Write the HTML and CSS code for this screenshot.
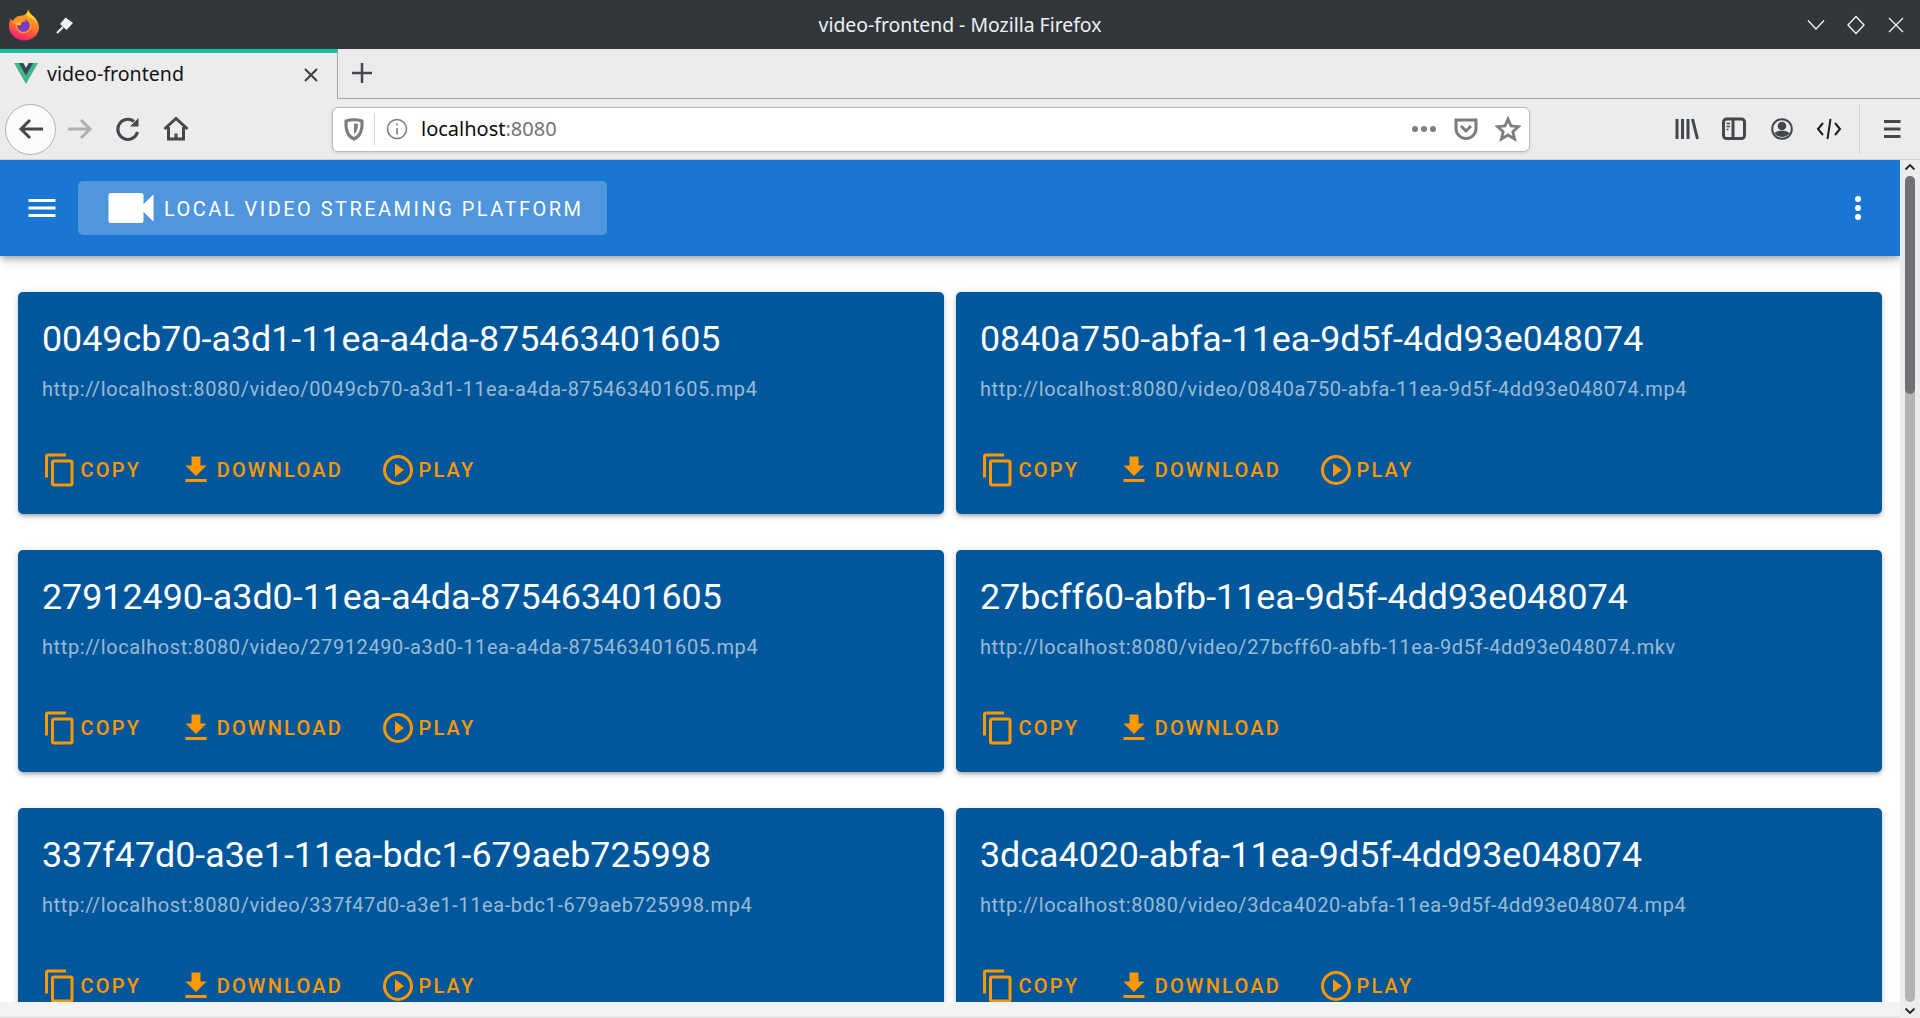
FILE: index.html
```html
<!DOCTYPE html>
<html lang="en">
<head>
<meta charset="utf-8">
<title>video-frontend</title>
<link rel="stylesheet" href="styles.css">
</head>
<body>
<svg class="defs" width="0" height="0" aria-hidden="true">
  <defs>
    <symbol id="i-copy" viewBox="0 0 24 24"><path d="M19,21H8V7H19M19,5H8A2,2 0 0,0 6,7V21A2,2 0 0,0 8,23H19A2,2 0 0,0 21,21V7A2,2 0 0,0 19,5M16,1H4A2,2 0 0,0 2,3V17H4V3H16V1Z"/></symbol>
    <symbol id="i-download" viewBox="0 0 24 24"><path d="M5,20H19V18H5M19,9H15V3H9V9H5L12,16L19,9Z"/></symbol>
    <symbol id="i-play" viewBox="0 0 24 24"><path d="M10,16.5L16,12L10,7.5V16.5M12,20C7.59,20 4,16.41 4,12C4,7.59 7.59,4 12,4C16.41,4 20,7.59 20,12C20,16.41 16.41,20 12,20M12,2A10,10 0 0,0 2,12A10,10 0 0,0 12,22A10,10 0 0,0 22,12A10,10 0 0,0 12,2Z"/></symbol>
    <linearGradient id="ff-a" x1="0.7" y1="0" x2="0.35" y2="1">
      <stop offset="0" stop-color="#ffc02a"/><stop offset="0.4" stop-color="#ff8a25"/><stop offset="0.75" stop-color="#ff4a4a"/><stop offset="1" stop-color="#e5177c"/>
    </linearGradient>
  </defs>
</svg>

<header class="titlebar">
  <div class="tb-left">
    <svg class="ff-logo" width="32" height="32" viewBox="0 0 32 32">
      <path fill="url(#ff-a)" d="M20 0.500c.5 3 3.500 5 6.500 8 2.500 3 4.500 6.500 4.500 9.500 0 8-6.500 13.500-15 13.500C7.500 31.500 1 25 1 17 1 14 1.500 11.500 3 9c.2 1.500.7 2.500 1.500 3.500C6 9 9 7 12 7c2.500-.5 5-1 6.500-2.500C19.500 3.500 20 2 20 0.500z"/>
      <path fill="#ffd32b" d="M20 0.500c.5 3 3.500 5 6.500 8 1.500 2 3 4.500 3.500 6.500-2-3.500-5-5.500-8-6.500-2-.7-3.500-2-4-3.500C19.500 3.500 20 2 20 0.500z"/>
      <circle cx="15.500" cy="16.500" r="7.800" fill="#ff9a1f"/>
      <circle cx="15.500" cy="16.500" r="6.300" fill="#7a3ac4"/>
      <path fill="#ff9a1f" d="M3.500 12.500c3-2.500 6.500-3 10-2.500 2 .3 4 1 5 2.500-3 0-5 .5-6 2.500-1.500.5-3 .8-4.500.5C6 15 4.500 14 3.500 12.500z"/>
      <path fill="#ffc42b" d="M7 14.500c2.500-1 5-.5 6.500.5-1 1-2 1.500-3.500 1.200C9 16 8 15.500 7 14.500z"/>
    </svg>
    <svg class="pin" width="18" height="18" viewBox="0 0 18 18">
      <path class="pin-head" d="M9.500 1.500l7.500 5.500-6.500 7L4 8z"/>
      <path class="pin-needle" d="M7 11l-6 6"/>
    </svg>
  </div>
  <div class="tb-title">video-frontend - Mozilla Firefox</div>
  <div class="tb-controls">
    <svg class="win-ctl" width="40" height="20" viewBox="0 0 40 20"><path d="M12 5.500L20 14l8-8.500"/></svg>
    <svg class="win-ctl" width="40" height="20" viewBox="0 0 40 20"><path d="M20 1.500L28 10l-8 8.500L12 10z"/></svg>
    <svg class="win-ctl" width="40" height="20" viewBox="0 0 40 20"><path d="M13 3l14 14M27 3L13 17"/></svg>
  </div>
</header>

<nav class="tabstrip">
  <div class="tab">
    <svg class="favicon" width="24" height="21" viewBox="0 0 261.76 226.69">
      <path fill="#41b883" d="M161.096.001l-30.225 52.351L100.647.001H-.005l130.877 226.688L261.749.001z"/>
      <path fill="#34495e" d="M161.096.001l-30.225 52.351L100.647.001H52.346l78.526 136.01L209.398.001z"/>
    </svg>
    <span class="tab-label">video-frontend</span>
    <svg class="tab-close" width="16" height="16" viewBox="0 0 16 16"><path d="M2 2l12 12M14 2L2 14"/></svg>
  </div>
  <div class="newtab">
    <svg class="plus" width="22" height="22" viewBox="0 0 22 22"><path d="M11 1v20M1 11h20"/></svg>
  </div>
</nav>

<div class="toolbar">
  <div class="back-btn">
    <svg class="ico" width="30" height="30" viewBox="0 0 30 30"><path d="M27 15H5M14 6l-9 9 9 9"/></svg>
  </div>
  <div class="slot slot-fwd">
    <svg class="ico ico-off" width="30" height="30" viewBox="0 0 30 30"><path d="M3 15h22M16 6l9 9-9 9"/></svg>
  </div>
  <div class="slot">
    <svg class="ico" width="30" height="30" viewBox="0 0 30 30"><path d="M24.500 18A10 10 0 1 1 21 7.500"/><path class="ico-fill" d="M25.500 4v8.500H17z"/></svg>
  </div>
  <div class="slot">
    <svg class="ico" width="30" height="30" viewBox="0 0 30 30"><path d="M3.500 15L15 4.500 26.500 15M7.500 13v12h15V13"/><path class="ico-fill" d="M13.500 19.500h3V25h-3z"/></svg>
  </div>
  <div class="urlbar">
    <svg class="ico-gray" width="22" height="24" viewBox="0 0 22 24"><path d="M3 4c5-1.500 11-1.500 16 0 .5 8-1 15-8 18C4 19 2.500 12 3 4z"/><path class="ico-gray-fill" d="M11 6.500c1.500 0 3 .2 4 .5 0 4-1 8-4 10z"/></svg>
    <span class="url-sep"></span>
    <svg class="info" width="22" height="22" viewBox="0 0 22 22"><circle cx="11" cy="11" r="9.500"/><path d="M11 10v6.500M11 5.500v2"/></svg>
    <div class="url-text">localhost<span class="url-port">:8080</span></div>
    <svg class="dots" width="26" height="8" viewBox="0 0 26 8"><circle cx="4" cy="4" r="3"/><circle cx="13" cy="4" r="3"/><circle cx="22" cy="4" r="3"/></svg>
    <svg class="ico-gray pocket" width="26" height="24" viewBox="0 0 26 24"><path d="M3 3h20v8.500c0 5.500-4.500 10-10 10s-10-4.500-10-10z"/><path d="M8 9l5 5 5-5"/></svg>
    <svg class="ico-gray star" width="26" height="26" viewBox="0 0 26 26"><path d="M13 3l3 7 7.500.7-5.700 5 1.800 7.300-6.600-4-6.600 4 1.800-7.300-5.700-5L10 10z"/></svg>
  </div>
  <div class="slot slot-right slot-first">
    <svg class="ico" width="30" height="30" viewBox="0 0 30 30"><path d="M5 5v20M10.500 5v20M16 5v20M20.500 5l5 20"/></svg>
  </div>
  <div class="slot slot-right">
    <svg class="ico" width="30" height="30" viewBox="0 0 30 30"><rect x="4.500" y="5" width="21" height="19.500" rx="3"/><path d="M14 5v19.500"/><path class="thin" d="M7.500 9.500h3.500M7.500 12.500h3.500M7.500 15.500h2"/></svg>
  </div>
  <div class="slot slot-right">
    <svg class="ico" width="30" height="30" viewBox="0 0 30 30"><circle class="thin-circle" cx="15" cy="15" r="9.800"/><circle class="ico-fill" cx="15" cy="12" r="4.300"/><path class="ico-fill" d="M7.500 19c2-1.700 4.500-2.300 7.500-2.300s5.500.6 7.500 2.300c-1.500 2.500-4.500 4-7.500 4s-6-1.500-7.500-4z"/></svg>
  </div>
  <div class="slot slot-right">
    <svg class="ico ico-dark" width="30" height="30" viewBox="0 0 30 30"><path d="M9 9l-5 6 5 6M21 9l5 6-5 6M16.500 5l-3 20"/></svg>
  </div>
  <span class="tool-sep"></span>
  <div class="slot slot-burger">
    <svg class="ico" width="30" height="30" viewBox="0 0 30 30"><path d="M7 7.500h16.500M7 15h16.500M7 22.500h16.500"/></svg>
  </div>
</div>

<div class="viewport">
  <div class="page-col">
    <main class="page">
      <div class="appbar">
        <svg class="burger" width="36" height="36" viewBox="0 0 24 24"><path d="M3,6H21V8H3V6M3,11H21V13H3V11M3,16H21V18H3V16Z"/></svg>
        <div class="brand">
          <svg class="brand-icon" width="60" height="60" viewBox="0 0 24 24"><path d="M17,10.500V7A1,1 0 0,0 16,6H4A1,1 0 0,0 3,7V17A1,1 0 0,0 4,18H16A1,1 0 0,0 17,17V13.500L21,17.500V6.500L17,10.500Z"/></svg>
          <span class="brand-text">Local Video Streaming Platform</span>
        </div>
        <svg class="kebab" width="36" height="36" viewBox="0 0 24 24"><path d="M12,16A2,2 0 0,1 14,18A2,2 0 0,1 12,20A2,2 0 0,1 10,18A2,2 0 0,1 12,16M12,10A2,2 0 0,1 14,12A2,2 0 0,1 12,14A2,2 0 0,1 10,12A2,2 0 0,1 12,10M12,4A2,2 0 0,1 14,6A2,2 0 0,1 12,8A2,2 0 0,1 10,6A2,2 0 0,1 12,4Z"/></svg>
      </div>
      <div class="cards">
        <article class="card">
          <h2 class="card-title">0049cb70-a3d1-11ea-a4da-875463401605</h2>
          <p class="card-url">http://localhost:8080/video/0049cb70-a3d1-11ea-a4da-875463401605.mp4</p>
          <div class="actions">
            <a class="action"><svg class="a-icon"><use href="#i-copy"/></svg>Copy</a>
            <a class="action"><svg class="a-icon"><use href="#i-download"/></svg>Download</a>
            <a class="action"><svg class="a-icon"><use href="#i-play"/></svg>Play</a>
          </div>
        </article>
        <article class="card">
          <h2 class="card-title">0840a750-abfa-11ea-9d5f-4dd93e048074</h2>
          <p class="card-url">http://localhost:8080/video/0840a750-abfa-11ea-9d5f-4dd93e048074.mp4</p>
          <div class="actions">
            <a class="action"><svg class="a-icon"><use href="#i-copy"/></svg>Copy</a>
            <a class="action"><svg class="a-icon"><use href="#i-download"/></svg>Download</a>
            <a class="action"><svg class="a-icon"><use href="#i-play"/></svg>Play</a>
          </div>
        </article>
        <article class="card">
          <h2 class="card-title">27912490-a3d0-11ea-a4da-875463401605</h2>
          <p class="card-url">http://localhost:8080/video/27912490-a3d0-11ea-a4da-875463401605.mp4</p>
          <div class="actions">
            <a class="action"><svg class="a-icon"><use href="#i-copy"/></svg>Copy</a>
            <a class="action"><svg class="a-icon"><use href="#i-download"/></svg>Download</a>
            <a class="action"><svg class="a-icon"><use href="#i-play"/></svg>Play</a>
          </div>
        </article>
        <article class="card">
          <h2 class="card-title">27bcff60-abfb-11ea-9d5f-4dd93e048074</h2>
          <p class="card-url">http://localhost:8080/video/27bcff60-abfb-11ea-9d5f-4dd93e048074.mkv</p>
          <div class="actions">
            <a class="action"><svg class="a-icon"><use href="#i-copy"/></svg>Copy</a>
            <a class="action"><svg class="a-icon"><use href="#i-download"/></svg>Download</a>
          </div>
        </article>
        <article class="card">
          <h2 class="card-title">337f47d0-a3e1-11ea-bdc1-679aeb725998</h2>
          <p class="card-url">http://localhost:8080/video/337f47d0-a3e1-11ea-bdc1-679aeb725998.mp4</p>
          <div class="actions">
            <a class="action"><svg class="a-icon"><use href="#i-copy"/></svg>Copy</a>
            <a class="action"><svg class="a-icon"><use href="#i-download"/></svg>Download</a>
            <a class="action"><svg class="a-icon"><use href="#i-play"/></svg>Play</a>
          </div>
        </article>
        <article class="card">
          <h2 class="card-title">3dca4020-abfa-11ea-9d5f-4dd93e048074</h2>
          <p class="card-url">http://localhost:8080/video/3dca4020-abfa-11ea-9d5f-4dd93e048074.mp4</p>
          <div class="actions">
            <a class="action"><svg class="a-icon"><use href="#i-copy"/></svg>Copy</a>
            <a class="action"><svg class="a-icon"><use href="#i-download"/></svg>Download</a>
            <a class="action"><svg class="a-icon"><use href="#i-play"/></svg>Play</a>
          </div>
        </article>
      </div>
    </main>
    <div class="statusbar"></div>
  </div>
  <aside class="scrollbar">
    <svg class="sb-arrow" width="12" height="8" viewBox="0 0 12 8"><path d="M1.500 6.500L6 2l4.500 4.500"/></svg>
    <div class="sb-track"><div class="sb-thumb"></div></div>
    <svg class="sb-arrow" width="12" height="8" viewBox="0 0 12 8"><path d="M1.500 1.500L6 6l4.500-4.500"/></svg>
  </aside>
</div>
</body>
</html>
```

FILE: styles.css
```css
* { box-sizing: border-box; }
html, body { margin: 0; padding: 0; height: 100%; overflow: hidden; }
body {
  width: 1920px;
  height: 1018px;
  display: flex;
  flex-direction: column;
  font-family: "Noto Sans", sans-serif;
  background: #fff;
}
.defs { display: block; width: 0; height: 0; }

/* window title */
.titlebar {
  height: 49px;
  flex: none;
  background: #31363b;
  display: grid;
  grid-template-columns: 1fr auto 1fr;
  align-items: center;
}
.tb-left { display: flex; align-items: center; padding-left: 8px; }
.pin { margin-left: 16px; }
.pin-head { fill: #eff0f1; }
.pin-needle { fill: none; stroke: #eff0f1; stroke-width: 2; }
.tb-title { color: #eff0f1; font-size: 19.400px; }
.tb-controls { display: flex; justify-content: flex-end; padding-right: 4px; }
.win-ctl { fill: none; stroke: #eff0f1; stroke-width: 1.4; }

/* tabs */
.tabstrip { height: 50px; flex: none; display: flex; background: #ebebeb; }
.tab {
  width: 338px;
  display: flex;
  align-items: center;
  padding: 0 18px 6px 14px;
  background: #ececec;
  border-top: 4px solid #1abc9c;
  border-right: 1px solid #a6a6a6;
}
.tab-label { margin-left: 9px; font-size: 19.600px; color: #15141a; flex: 1; white-space: nowrap; }
.tab-close { fill: none; stroke: #3b3f44; stroke-width: 2; margin-top: 4px; }
.newtab {
  flex: 1;
  display: flex;
  align-items: center;
  padding: 0 0 2px 13px;
  border-bottom: 1px solid #a6a6a6;
}
.plus { fill: none; stroke: #44484d; stroke-width: 2.500; }

/* toolbar */
.toolbar {
  height: 61px;
  flex: none;
  display: flex;
  align-items: center;
  background: #ececec;
  border-bottom: 1px solid #cfcfcf;
  padding-left: 5px;
}
.back-btn {
  width: 51px;
  height: 51px;
  flex: none;
  border-radius: 50%;
  background: #fbfbfb;
  border: 1px solid #b1b1b1;
  display: flex;
  align-items: center;
  justify-content: center;
}
.slot { width: 48px; height: 48px; flex: none; display: flex; align-items: center; justify-content: center; }
.slot-right { width: 47.500px; }
.ico { fill: none; stroke: #44484d; stroke-width: 3; }
.ico-off { stroke: #b0b0b0; }
.ico-dark { stroke: #1c1f22; stroke-width: 2; }
.ico-fill { fill: #44484d; stroke: none; }
.thin { stroke-width: 1.500; }
.thin-circle { stroke-width: 2; }

.urlbar {
  width: 1198px;
  height: 45px;
  flex: none;
  margin-left: 132px;
  display: flex;
  align-items: center;
  padding: 0 8px 0 10px;
  background: #fff;
  border: 1px solid #b9b9b9;
  border-radius: 6px;
  box-shadow: 0 1px 3px rgba(0, 0, 0, .12);
}
.ico-gray { fill: none; stroke: #7b7d80; stroke-width: 3; flex: none; }
.ico-gray-fill { fill: #7b7d80; stroke: none; }
.url-sep { width: 1px; height: 32px; margin-left: 9px; background: #d4d4d4; flex: none; }
.info { margin-left: 11px; fill: none; stroke: #7b7d80; stroke-width: 1.600; flex: none; }
.url-text { margin-left: 13px; padding-bottom: 2px; font-size: 20px; color: #0c0c0d; flex: 1; }
.url-port { color: #737373; }
.dots { fill: #7b7d80; flex: none; margin-right: 16px; }
.pocket { margin-right: 16px; }
.star { stroke-width: 2.800; }

.slot-first { margin-left: 133px; }
.tool-sep { width: 1px; height: 50px; margin-left: 6px; background: #d4d4d4; flex: none; }
.slot-burger { margin-left: 8px; }

/* page */
.viewport { flex: 1; display: flex; min-height: 0; }
.page-col { flex: 1; min-width: 0; display: flex; flex-direction: column; }
.page { flex: 1; min-height: 0; overflow: hidden; background: #fff; font-family: Roboto, sans-serif; }
.statusbar {
  height: 16px;
  flex: none;
  background: linear-gradient(#f3f3f3 85%, #d9d9d9);
}

.appbar {
  height: 96px;
  position: relative;
  display: flex;
  align-items: center;
  padding: 0 24px 0 24px;
  background: #1976d2;
  box-shadow: 0 3px 6px -1px rgba(0, 0, 0, .3), 0 6px 12px rgba(0, 0, 0, .12);
}
.burger, .kebab { fill: #fff; flex: none; }
.brand {
  height: 54px;
  margin-left: 18px;
  width: 529px;
  display: flex;
  align-items: center;
  padding-left: 23px;
  background: rgba(255, 255, 255, .24);
  border-radius: 5px;
}
.brand-icon { fill: #fff; flex: none; margin-right: 3px; }
.brand-text {
  padding-top: 1px;
  color: #fff;
  font-size: 20px;
  font-weight: 400;
  text-transform: uppercase;
  letter-spacing: 2.470px;
  white-space: nowrap;
}
.kebab { margin-left: auto; }

.cards {
  display: grid;
  grid-template-columns: 1fr 1fr;
  column-gap: 12px;
  row-gap: 36px;
  padding: 36px 18px 0;
}
.card {
  height: 222px;
  padding: 24px 24px 0;
  display: flex;
  flex-direction: column;
  background: #01579b;
  border-radius: 5px;
  box-shadow: 0 3px 3px -2px rgba(0, 0, 0, .2), 0 3px 4px rgba(0, 0, 0, .14), 0 1px 8px rgba(0, 0, 0, .12);
}
.card-title {
  margin: 0;
  font-size: 35.800px;
  line-height: 46px;
  font-weight: 400;
  color: #fff;
  white-space: nowrap;
}
.card-url {
  margin: 15px 0 0;
  font-size: 20px;
  line-height: 24px;
  letter-spacing: .6px;
  color: rgba(255, 255, 255, .6);
  white-space: nowrap;
}
.actions { display: flex; margin-top: 46px; gap: 37px; }
.action {
  display: flex;
  align-items: center;
  height: 45px;
  font-size: 20px;
  font-weight: 500;
  text-transform: uppercase;
  letter-spacing: 2.200px;
  color: #ff9800;
}
.a-icon { width: 36px; height: 36px; fill: #ff9800; margin-right: 2.500px; flex: none; }

/* scrollbar */
.scrollbar {
  width: 20px;
  flex: none;
  display: flex;
  flex-direction: column;
  align-items: center;
  padding: 3px 1px 3px 0;
  background: #ececec;
}
.sb-arrow { fill: none; stroke: #232629; stroke-width: 1.800; flex: none; }
.sb-track {
  flex: 1;
  width: 10px;
  margin: 5px 0 5px;
  background: #b3b3b3;
  border-radius: 5px;
}
.sb-thumb { height: 218px; background: #6f7175; border-radius: 5px; }
```
